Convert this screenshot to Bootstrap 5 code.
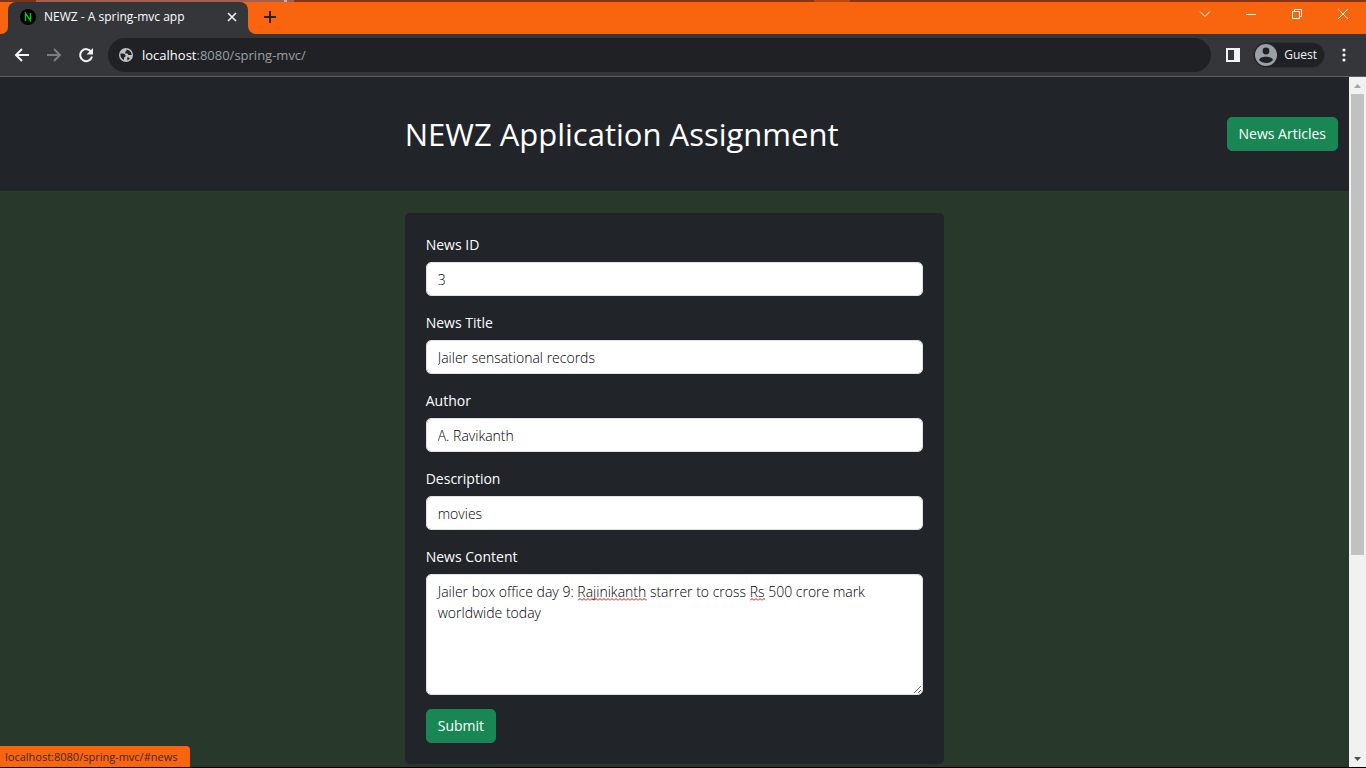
<!DOCTYPE html>
<html lang="en">
<head>
<meta charset="utf-8">
<meta name="viewport" content="width=device-width, initial-scale=1">
<title>NEWZ - A spring-mvc app</title>
<link href="https://cdn.jsdelivr.net/npm/bootstrap@5.3.0/dist/css/bootstrap.min.css" rel="stylesheet">
<style>
  body { font-family: "Open Sans", "Noto Sans", sans-serif; font-size: 14px; line-height: 22px; background: #000; }
  svg { display: block; flex: none; }
  .browser { height: 100vh; padding-bottom: 1px; }
  .desktop-edge { height: 2px; background: linear-gradient(90deg, #7f341a 36px, #a4604f 36px 284px, #b9b9b9 284px 287px, #a4604f 287px 294px, #8b3415 294px 814px, #bd480f 814px 850px, #8b3415 850px); }
  .tab-strip { height: 32px; background: #35363a; color: #fff; }
  .strip-end { width: 8px; background: #f9650f; border-bottom-right-radius: 7px; }
  .page-tab { width: 240px; background: linear-gradient(#f9650f 8px, #35363a 8px); font-size: 12px; }
  .page-tab-face { background: #35363a; border-radius: 8px 8px 0 0; padding: 0 11px 2px 12px; }
  .tab-rest { background: #f9650f; border-bottom-left-radius: 8px; padding-left: 9px; }
  .plain-btn { border: 0; background: none; padding: 0; color: inherit; }
  .window-btn { width: 46px; height: 24px; }
  .toolbar { height: 43px; background: #35363a; border-bottom: 1px solid #5f6064; color: #f1f3f4; padding-left: 14px; padding-right: 14px; }
  .address { height: 34px; background: #202124; padding-left: 10px; margin-left: 14px; margin-right: 14px; font-size: 13px; }
  .address-host { color: #fff; }
  .address-rest { color: #9aa0a6; }
  .guest { height: 26px; background: #202124; border: 1px solid #2d2e32; font-size: 12px; margin-left: 12px; padding-right: 7px; margin-right: 11px; gap: 6px; }
  .site { background: #28382a; min-height: 0; }
  .site-header { height: 114px; background: #212529; }
  .site-title { font-size: 31px; line-height: 40px; font-weight: 400; margin: 0; }
  .header-action { right: 11px; }
  .form-column { width: 40%; }
  .btn-success { --bs-btn-font-size: 14px; --bs-btn-padding-x: 11px; --bs-btn-padding-y: 5px; --bs-btn-line-height: 22px; --bs-btn-border-radius: 5px; }
  .news-card { background: #212529; border-radius: 5px; padding: 21px; margin-top: 22px; }
  .form-label { margin-bottom: 6px; }
  .field { margin-bottom: 16px; }
  .form-control, .form-control:focus { color: #000; }
  .form-control { font-size: 14px; line-height: 22px; padding: 6px 11px 4px; border-radius: 5px; font-weight: 300; }
  .form-control.story { height: 121px; line-height: 21px; }
  .field-last { margin-bottom: 14px; }
  .squiggle { position: absolute; height: 3px; pointer-events: none; }
  .squiggle-name { left: 152px; top: 24px; width: 69px; }
  .squiggle-unit { left: 324px; top: 24px; width: 15px; }
  .scroll-rail { width: 17px; background: #f1f1f1; padding: 0 2px; }
  .scroll-thumb { flex: 461; background: #c1c1c1; }
  .scroll-gap { flex: 195; }
  .scroll-end { height: 17px; }
  .link-status { position: absolute; left: 0; bottom: 1px; height: 21px; width: 190px; padding-left: 5px; background: #f9650f; color: #3b2a22; font-size: 11px; border-top-right-radius: 4px; white-space: nowrap; }
</style>
</head>
<body>
<div class="browser d-flex flex-column position-relative">
  <div class="desktop-edge"></div>
  <div class="tab-strip d-flex">
    <div class="strip-end"></div>
    <div class="page-tab d-flex">
      <div class="page-tab-face d-flex align-items-center flex-grow-1">
        <svg width="16" height="16" viewBox="0 0 16 16"><circle cx="8" cy="8" r="8" fill="#000"/><path d="M5.500 12V4.500L10.500 11.500V4" fill="none" stroke="#0bc70b" stroke-width="1.400"/></svg>
        <span class="flex-grow-1 ms-2">NEWZ - A spring-mvc app</span>
        <button class="plain-btn" aria-label="Close tab"><svg width="10" height="10" viewBox="0 0 10 10"><path d="M1 1l8 8M9 1l-8 8" stroke="#f1f3f4" stroke-width="1.600"/></svg></button>
      </div>
    </div>
    <div class="tab-rest flex-grow-1 d-flex">
      <button class="plain-btn" aria-label="New tab"><svg width="26" height="28" viewBox="0 0 26 28"><path d="M13 7v12M7 13h12" stroke="#2c2320" stroke-width="2"/></svg></button>
      <div class="ms-auto d-flex">
        <button class="plain-btn window-btn" aria-label="Search tabs"><svg class="mx-auto" width="12" height="12" viewBox="0 0 12 12"><path d="M1 3.500l5 5 5-5" fill="none" stroke="#fff"/></svg></button>
        <button class="plain-btn window-btn" aria-label="Minimize"><svg class="mx-auto" width="12" height="12" viewBox="0 0 12 12"><path d="M1 6.500h10" stroke="#fff"/></svg></button>
        <button class="plain-btn window-btn" aria-label="Restore"><svg class="mx-auto" width="12" height="12" viewBox="0 0 12 12"><path d="M1.500 3.500h7v7h-7zM3.500 3.500v-2h7v7h-2" fill="none" stroke="#fff"/></svg></button>
        <button class="plain-btn window-btn" aria-label="Close window"><svg class="mx-auto" width="12" height="12" viewBox="0 0 12 12"><path d="M1 1l10 10M11 1L1 11" stroke="#fff"/></svg></button>
      </div>
    </div>
  </div>
  <div class="toolbar d-flex align-items-center">
    <div class="d-flex gap-3">
      <button class="plain-btn" aria-label="Back"><svg width="16" height="16" viewBox="0 0 16 16"><path d="M15 8H2.500M8 2L2 8l6 6" fill="none" stroke="#f1f3f4" stroke-width="2"/></svg></button>
      <button class="plain-btn" aria-label="Forward" disabled><svg width="16" height="16" viewBox="0 0 16 16"><path d="M1 8h12.500M8 2l6 6-6 6" fill="none" stroke="#7c7d80" stroke-width="2"/></svg></button>
      <button class="plain-btn" aria-label="Reload"><svg width="16" height="16" viewBox="0 0 16 16"><path d="M13.300 5A6 6 0 1 0 14 9.500" fill="none" stroke="#f1f3f4" stroke-width="2"/><path d="M15 1v6.500H8.500z" fill="#f1f3f4"/></svg></button>
    </div>
    <div class="address d-flex align-items-center rounded-pill flex-grow-1">
      <svg width="16" height="16" viewBox="0 0 16 16"><circle cx="8" cy="8" r="7" fill="#bdc1c6"/><path d="M2.500 6.500h3l2 1.500v1.500l-1.500 1v2.500C3.500 12 2 9.500 2.500 6.500zM8.500 2.500v1.300L7.200 5v1.500h2.300l1 1.500h3.200C13.500 5 11.500 3 8.500 2.500zM9 10.500h2l.8 1.300L9.500 13.500z" fill="#202124"/></svg>
      <span class="ms-2"><span class="address-host">localhost</span><span class="address-rest">:8080/spring-mvc/</span></span>
    </div>
    <button class="plain-btn" aria-label="Side panel"><svg width="16" height="16" viewBox="0 0 16 16"><path d="M1 1h14v14H1zM3 3v10h6V3z" fill="#f1f3f4" fill-rule="evenodd"/></svg></button>
    <button class="guest plain-btn rounded-pill d-flex align-items-center"><svg width="24" height="24" viewBox="0 0 24 24"><circle cx="12" cy="12" r="11" fill="#9aa0a6"/><circle cx="12" cy="8" r="3.400" fill="#202124"/><path d="M5 17c1-4.500 13-4.500 14 0-3.500 4-10.500 4-14 0z" fill="#202124"/></svg><span>Guest</span></button>
    <button class="plain-btn" aria-label="Menu"><svg width="16" height="16" viewBox="0 0 16 16" fill="#f1f3f4"><circle cx="8" cy="3" r="1.600"/><circle cx="8" cy="8" r="1.600"/><circle cx="8" cy="13" r="1.600"/></svg></button>
  </div>
  <div class="site d-flex flex-grow-1">
    <div class="flex-grow-1 overflow-hidden">
      <header class="site-header d-flex align-items-center position-relative">
        <div class="form-column mx-auto"><h1 class="site-title text-white text-nowrap">NEWZ Application Assignment</h1></div>
        <a href="#news" class="btn btn-success header-action position-absolute">News Articles</a>
      </header>
      <main class="form-column mx-auto">
        <form class="news-card text-white">
          <div class="field"><label class="form-label" for="newsId">News ID</label><input class="form-control" id="newsId" value="3"></div>
          <div class="field"><label class="form-label" for="newsTitle">News Title</label><input class="form-control" id="newsTitle" value="Jailer sensational records"></div>
          <div class="field"><label class="form-label" for="author">Author</label><input class="form-control" id="author" value="A. Ravikanth"></div>
          <div class="field"><label class="form-label" for="description">Description</label><input class="form-control" id="description" value="movies"></div>
          <div class="field-last"><label class="form-label" for="content">News Content</label>
            <div class="position-relative">
              <textarea class="form-control story" id="content" spellcheck="false">Jailer box office day 9: Rajinikanth starrer to cross Rs 500 crore mark worldwide today</textarea>
              <svg class="squiggle squiggle-name"><defs><pattern id="wave" width="4" height="3" patternUnits="userSpaceOnUse"><path d="M0 2.500L2 .5l2 2" fill="none" stroke="#f00000"/></pattern></defs><rect width="100%" height="3" fill="url(#wave)"/></svg>
              <svg class="squiggle squiggle-unit"><rect width="100%" height="3" fill="url(#wave)"/></svg>
            </div>
          </div>
          <button type="submit" class="btn btn-success">Submit</button>
        </form>
      </main>
    </div>
    <div class="scroll-rail d-flex flex-column" aria-hidden="true">
      <div class="scroll-end"><svg width="13" height="17" viewBox="0 0 13 17"><path d="M3 11l3.500-4L10 11z" fill="#a3a3a3"/></svg></div>
      <div class="scroll-thumb"></div>
      <div class="scroll-gap"></div>
      <div class="scroll-end"><svg width="13" height="17" viewBox="0 0 13 17"><path d="M3 7l3.500 4L10 7z" fill="#505050"/></svg></div>
    </div>
  </div>
  <div class="link-status">localhost:8080/spring-mvc/#news</div>
</div>
<script src="https://cdn.jsdelivr.net/npm/bootstrap@5.3.0/dist/js/bootstrap.bundle.min.js"></script>
</body>
</html>
